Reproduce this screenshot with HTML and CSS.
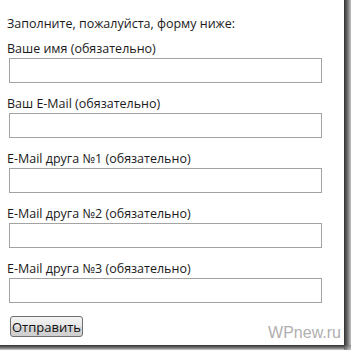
FILE: index.html
```html
<!DOCTYPE html>
<html lang="ru">
<head>
  <meta charset="UTF-8">
  <meta name="viewport" content="width=device-width, initial-scale=1.0">
  <title>Форма</title>
  <link rel="stylesheet" href="styles.css">
</head>
<body>
  <div class="shot">
    <div class="page">
      <form action="#" class="form">
        <p class="intro">Заполните, пожалуйста, форму ниже:</p>
        <div class="field">
          <label for="name">Ваше имя (обязательно)</label>
          <input type="text" id="name">
        </div>
        <div class="field">
          <label for="mail">Ваш E-Mail (обязательно)</label>
          <input type="text" id="mail">
        </div>
        <div class="field">
          <label for="f1">E-Mail друга №1 (обязательно)</label>
          <input type="text" id="f1">
        </div>
        <div class="field">
          <label for="f2">E-Mail друга №2 (обязательно)</label>
          <input type="text" id="f2">
        </div>
        <div class="field">
          <label for="f3">E-Mail друга №3 (обязательно)</label>
          <input type="text" id="f3">
        </div>
        <button class="send">Отправить</button>
      </form>
      <span class="mark">WPnew.ru</span>
    </div>
    <div class="shadowRight"></div>
    <div class="shadowBottom"></div>
    <div class="shadowCorner"></div>
  </div>
</body>
</html>
```

FILE: styles.css
```css
*{
  padding: 0;
  margin: 0;
  box-sizing: border-box;
}
body{
  background-color: #fff;
  font-family: "Open Sans", "DejaVu Sans", sans-serif;
  font-size: 12.5px;
  color: #1a1a1a;
}
.shot{
  display: grid;
  grid-template-columns: 344px 7px;
  grid-template-rows: 345px 5px;
  width: 351px;
  height: 350px;
}
.page{
  position: relative;
  background-color: #fff;
}
.form{
  padding: 16px 0 0 7px;
}
.intro{
  line-height: 16px;
  margin-bottom: 9px;
}
.field{
  margin-bottom: 13px;
}
.field label{
  display: block;
  line-height: 16px;
  margin-bottom: 1px;
}
.field input{
  display: block;
  width: 313px;
  height: 25px;
  margin-left: 2px;
  border: 1px solid #a3a3a3;
  background-color: #fff;
}
.send{
  margin-left: 3px;
  width: 73px;
  height: 21px;
  font-family: inherit;
  font-size: 13px;
  color: #111;
  border: 1px solid #707070;
  border-radius: 3px;
  background: linear-gradient(#f4f4f4, #e6e6e6 50%, #d6d6d6 51%, #cfcfcf);
}
.mark{
  position: absolute;
  right: 3px;
  bottom: 3px;
  font-family: "Liberation Sans", Arial, sans-serif;
  font-size: 16px;
  color: #b0b0b0;
}
.shadowRight{
  background: linear-gradient(to right, #2e2e2e, #6e6e6e 50%, #c4c4c4);
}
.shadowBottom{
  background: linear-gradient(to bottom, #2e2e2e, #7a7a7a 60%, #d0d0d0);
}
.shadowCorner{
  background: linear-gradient(135deg, #444, #ccc);
}
```
